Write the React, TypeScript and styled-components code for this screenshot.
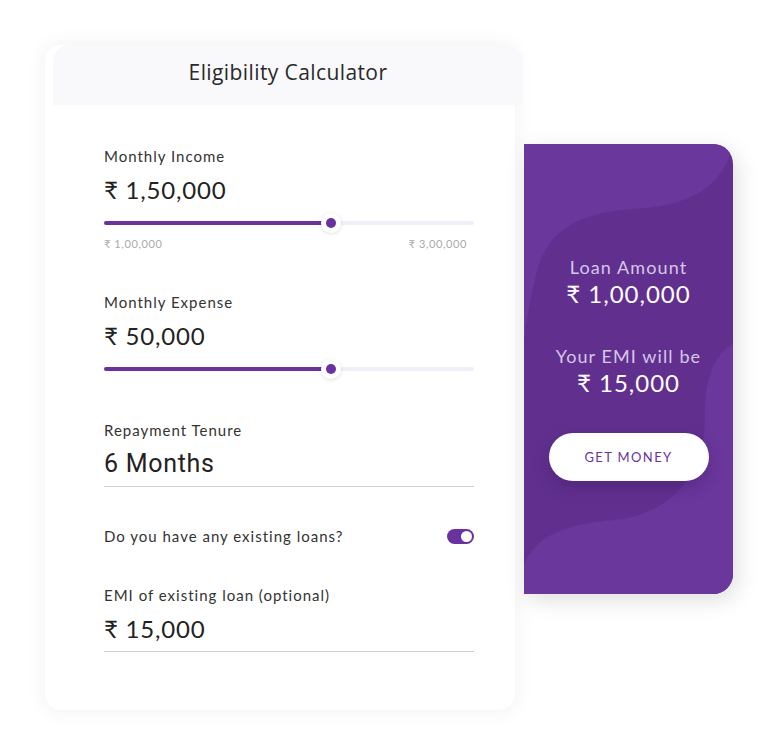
import React from "react";
import styled, { createGlobalStyle } from "styled-components";

const Global = createGlobalStyle`
  html, body { margin: 0; padding: 0; background: #ffffff; }
  body { font-family: "Lato", "DejaVu Sans", sans-serif; }
  * { box-sizing: border-box; }
`;

const SANS = `"Lato", "Noto Sans", "DejaVu Sans", sans-serif`;

const Page = styled.div`
  width: 778px;
  height: 756px;
  display: flex;
  align-items: flex-start;
  padding: 45px 0 0 45px;
  gap: 9px;
`;

const Card = styled.div`
  width: 470px;
  height: 665px;
  background: #fff;
  border-radius: 16px;
  box-shadow: 0 0 18px 4px rgba(0, 0, 0, 0.045);
  display: flex;
  flex-direction: column;
`;

const Header = styled.div`
  height: 60px;
  margin: 0 -8px 0 8px;
  background: #f9f9fb;
  border-radius: 16px 16px 0 0;
  display: flex;
  align-items: center;
  justify-content: center;
  font-family: "Open Sans", sans-serif;
  font-size: 21px;
  letter-spacing: 0.4px;
  color: #2a2a2a;
  padding: 0 0 6px 0;
`;

const Body = styled.div`
  padding: 42px 41px 0 59px;
  display: flex;
  flex-direction: column;
`;

const Field = styled.div<{ $mt?: number }>`
  margin-top: ${(p) => p.$mt ?? 0}px;
  display: flex;
  flex-direction: column;
`;

const Label = styled.div`
  font-family: ${SANS};
  font-size: 15px;
  letter-spacing: 1px;
  color: #333;
  line-height: 18px;
`;

const Value = styled.div<{ $font?: string; $ls?: number; $size?: number }>`
  font-family: ${(p) => p.$font ?? SANS};
  font-size: ${(p) => p.$size ?? 24}px;
  color: #222;
  line-height: 30px;
  margin-top: 10px;
  letter-spacing: ${(p) => p.$ls ?? 0.8}px;
`;

const SliderWrap = styled.div`
  position: relative;
  height: 20px;
  margin-top: 8px;
  display: flex;
  align-items: center;
`;

const Track = styled.div`
  width: 100%;
  height: 4px;
  border-radius: 2px;
  background: #f0f0fa;
`;

const Fill = styled.div`
  height: 100%;
  border-radius: 2px;
  background: #6a329f;
`;

const Knob = styled.div`
  position: absolute;
  top: 50%;
  width: 20px;
  height: 20px;
  margin: -10px 0 0 -10px;
  border-radius: 50%;
  background: #fff;
  box-shadow: 0 1px 4px rgba(0, 0, 0, 0.12);
  display: flex;
  align-items: center;
  justify-content: center;
  &::after {
    content: "";
    width: 10px;
    height: 10px;
    border-radius: 50%;
    background: #6a329f;
  }
`;

const Range = styled.div`
  display: flex;
  justify-content: space-between;
  font-family: ${SANS};
  font-size: 11px;
  letter-spacing: 0.6px;
  color: #aaa;
  margin-top: 4px;
  padding-right: 7px;
`;

const Underline = styled.div`
  height: 1px;
  background: #cfcfcf;
  margin-top: 7px;
`;

const ToggleRow = styled.div`
  display: flex;
  justify-content: space-between;
  align-items: center;
  margin-top: 40px;
`;

const Toggle = styled.div`
  width: 27px;
  height: 15px;
  border-radius: 8px;
  background: #6a329f;
  display: flex;
  align-items: center;
  justify-content: flex-end;
  padding-right: 2px;
  &::after {
    content: "";
    width: 11px;
    height: 11px;
    border-radius: 50%;
    background: #fff;
  }
`;

const Panel = styled.div`
  margin-top: 99px;
  width: 209px;
  height: 450px;
  border-radius: 0 20px 20px 0;
  background: #61308f;
  position: relative;
  overflow: hidden;
  box-shadow: 4px 6px 22px rgba(0, 0, 0, 0.13);
`;

const Waves = styled.svg`
  position: absolute;
  inset: 0;
`;

const PanelContent = styled.div`
  position: relative;
  display: flex;
  flex-direction: column;
  align-items: center;
  padding-top: 112px;
  height: 100%;
`;

const PanelLabel = styled.div<{ $mt?: number }>`
  font-family: ${SANS};
  font-size: 18px;
  color: #d6c6ea;
  letter-spacing: 1.1px;
  line-height: 22px;
  margin-top: ${(p) => p.$mt ?? 0}px;
`;

const PanelValue = styled.div`
  font-family: ${SANS};
  font-size: 24px;
  color: #fff;
  line-height: 30px;
  letter-spacing: 1px;
  margin-top: 1px;
`;

const Button = styled.button`
  margin-top: 35px;
  width: 160px;
  height: 48px;
  border: none;
  border-radius: 24px;
  background: #fff;
  color: #6a329f;
  font-family: ${SANS};
  font-size: 13px;
  letter-spacing: 1.4px;
  box-shadow: 0 6px 16px rgba(40, 10, 70, 0.25);
  cursor: pointer;
`;

function Slider({ pct }: { pct: number }) {
  return (
    <SliderWrap>
      <Track>
        <Fill style={{ width: `${pct}%` }} />
      </Track>
      <Knob style={{ left: `${pct}%` }} />
    </SliderWrap>
  );
}

export default function App() {
  return (
    <>
      <Global />
      <Page>
        <Card>
          <Header>Eligibility Calculator</Header>
          <Body>
            <Field>
              <Label>Monthly Income</Label>
              <Value>₹ 1,50,000</Value>
              <Slider pct={61.4} />
              <Range>
                <span>₹ 1,00,000</span>
                <span>₹ 3,00,000</span>
              </Range>
            </Field>
            <Field $mt={43}>
              <Label>Monthly Expense</Label>
              <Value>₹ 50,000</Value>
              <Slider pct={61.4} />
            </Field>
            <Field $mt={42}>
              <Label>Repayment Tenure</Label>
              <Value $font={`"Roboto", "Inter", sans-serif`} $ls={0.7} $size={25}>
                6 Months
              </Value>
              <Underline />
            </Field>
            <ToggleRow>
              <Label>Do you have any existing loans?</Label>
              <Toggle />
            </ToggleRow>
            <Field $mt={41}>
              <Label>EMI of existing loan (optional)</Label>
              <Value>₹ 15,000</Value>
              <Underline />
            </Field>
          </Body>
        </Card>
        <Panel>
          <Waves width="209" height="450" viewBox="0 0 209 450">
            <path
              d="M0 0 H209 V0 C200 40 170 60 120 64 C60 68 25 80 12 130 C4 165 0 190 0 200 Z"
              fill="#6a379c"
            />
            <path
              d="M209 200 C190 210 180 240 181 270 C182 330 150 365 100 375 C40 380 15 390 0 420 V450 H209 Z"
              fill="#6a379c"
            />
          </Waves>
          <PanelContent>
            <PanelLabel>Loan Amount</PanelLabel>
            <PanelValue>₹ 1,00,000</PanelValue>
            <PanelLabel $mt={36}>Your EMI will be</PanelLabel>
            <PanelValue>₹ 15,000</PanelValue>
            <Button>GET MONEY</Button>
          </PanelContent>
        </Panel>
      </Page>
    </>
  );
}
